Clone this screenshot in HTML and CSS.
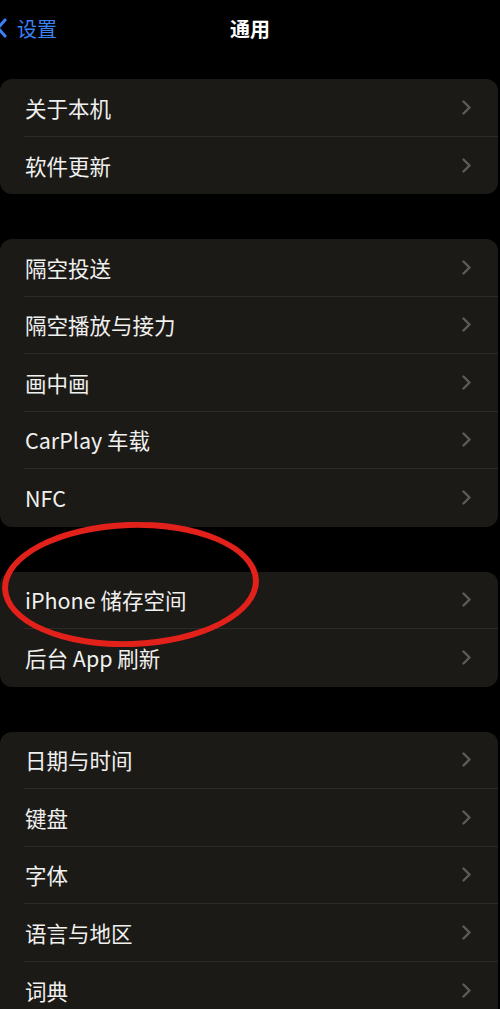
FILE: index.html
```html
<!DOCTYPE html>
<html lang="zh-CN">
<head>
<meta charset="utf-8">
<title>通用</title>
<link rel="stylesheet" href="styles.css">
</head>
<body>
<header class="nav">
  <a class="back">
    <svg class="back-icon" width="10" height="20" viewBox="0 0 10 20"><path d="M5 2 L-2 10 L5 18" fill="none" stroke="#3a82f7" stroke-width="3" stroke-linecap="round" stroke-linejoin="round"/></svg>
    <span>设置</span>
  </a>
  <h1 class="title">通用</h1>
</header>
<main class="groups">
  <section class="group">
    <div class="row"><span>关于本机</span><svg class="chev" viewBox="0 0 9 15"><path d="M1.5 1.5 L7.5 7.5 L1.5 13.5" /></svg></div>
    <div class="row"><span>软件更新</span><svg class="chev" viewBox="0 0 9 15"><path d="M1.5 1.5 L7.5 7.5 L1.5 13.5" /></svg></div>
  </section>
  <section class="group">
    <div class="row"><span>隔空投送</span><svg class="chev" viewBox="0 0 9 15"><path d="M1.5 1.5 L7.5 7.5 L1.5 13.5" /></svg></div>
    <div class="row"><span>隔空播放与接力</span><svg class="chev" viewBox="0 0 9 15"><path d="M1.5 1.5 L7.5 7.5 L1.5 13.5" /></svg></div>
    <div class="row"><span>画中画</span><svg class="chev" viewBox="0 0 9 15"><path d="M1.5 1.5 L7.5 7.5 L1.5 13.5" /></svg></div>
    <div class="row"><span>CarPlay 车载</span><svg class="chev" viewBox="0 0 9 15"><path d="M1.5 1.5 L7.5 7.5 L1.5 13.5" /></svg></div>
    <div class="row"><span>NFC</span><svg class="chev" viewBox="0 0 9 15"><path d="M1.5 1.5 L7.5 7.5 L1.5 13.5" /></svg></div>
  </section>
  <section class="group">
    <div class="row"><span>iPhone 储存空间</span><svg class="chev" viewBox="0 0 9 15"><path d="M1.5 1.5 L7.5 7.5 L1.5 13.5" /></svg></div>
    <div class="row"><span>后台 App 刷新</span><svg class="chev" viewBox="0 0 9 15"><path d="M1.5 1.5 L7.5 7.5 L1.5 13.5" /></svg></div>
  </section>
  <section class="group">
    <div class="row"><span>日期与时间</span><svg class="chev" viewBox="0 0 9 15"><path d="M1.5 1.5 L7.5 7.5 L1.5 13.5" /></svg></div>
    <div class="row"><span>键盘</span><svg class="chev" viewBox="0 0 9 15"><path d="M1.5 1.5 L7.5 7.5 L1.5 13.5" /></svg></div>
    <div class="row"><span>字体</span><svg class="chev" viewBox="0 0 9 15"><path d="M1.5 1.5 L7.5 7.5 L1.5 13.5" /></svg></div>
    <div class="row"><span>语言与地区</span><svg class="chev" viewBox="0 0 9 15"><path d="M1.5 1.5 L7.5 7.5 L1.5 13.5" /></svg></div>
    <div class="row"><span>词典</span><svg class="chev" viewBox="0 0 9 15"><path d="M1.5 1.5 L7.5 7.5 L1.5 13.5" /></svg></div>
  </section>
</main>
<div class="mark"></div>
</body>
</html>
```
FILE: styles.css
```css
html, body {
  margin: 0;
  padding: 0;
  background: #000;
}
body {
  width: 500px;
  height: 1009px;
  overflow: hidden;
  position: relative;
  font-family: "Noto Sans CJK SC", "Noto Sans", sans-serif;
  color: #f2f2f2;
}
.nav {
  height: 56px;
  display: flex;
  align-items: center;
  justify-content: center;
  position: relative;
}
.back {
  position: absolute;
  left: 0;
  top: 0;
  height: 56px;
  display: flex;
  align-items: center;
  color: #3a82f7;
  font-size: 20px;
}
.back-icon {
  width: 10px;
  height: 20px;
  margin-right: 7px;
}
.title {
  margin: 0;
  font-size: 20px;
  font-weight: 700;
  color: #fff;
}
.groups {
  padding-top: 23px;
  display: flex;
  flex-direction: column;
  gap: 45px;
}
.group {
  width: 498px;
  background: #1c1a17;
  border-radius: 12px;
  overflow: hidden;
}
.row {
  height: 57.5px;
  box-sizing: border-box;
  margin-left: 24px;
  padding-left: 1px;
  padding-right: 27px;
  display: flex;
  align-items: center;
  justify-content: space-between;
  font-size: 21.5px;
  color: #f0f0ee;
  border-bottom: 1px solid #2d2b28;
}
.row:last-child {
  border-bottom: none;
}
.chev {
  width: 9px;
  height: 15px;
  fill: none;
  stroke: #5e5c59;
  stroke-width: 2.4;
  stroke-linecap: round;
  stroke-linejoin: round;
}
.mark {
  position: absolute;
  left: 2px;
  top: 522px;
  width: 257px;
  height: 125px;
  box-sizing: border-box;
  border: 6px solid #e3211b;
  border-radius: 50%;
  transform: rotate(-2deg);
}
```
